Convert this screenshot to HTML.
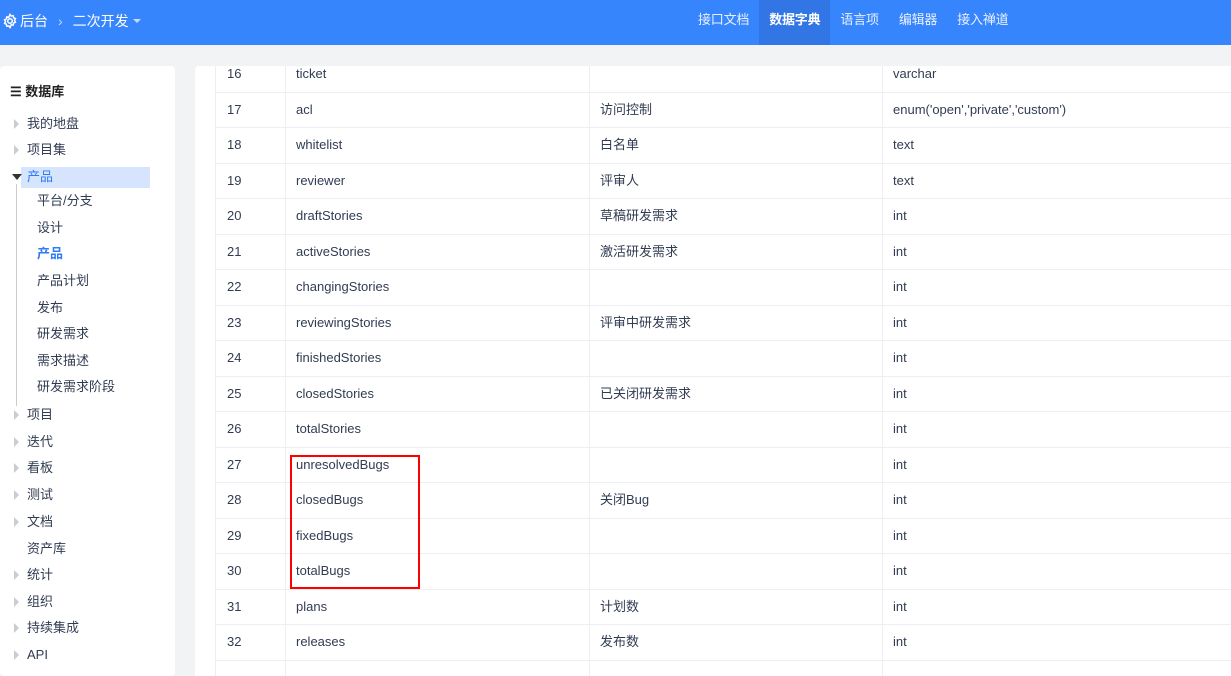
<!DOCTYPE html>
<html><head><meta charset="utf-8"><style>
*{margin:0;padding:0;box-sizing:border-box}
body{width:1231px;height:667px;overflow:hidden;background:#f2f3f5;font-family:"Liberation Sans","Noto Sans CJK SC",sans-serif;font-size:13px;color:#313c52;position:relative}
.hd{position:absolute;left:0;top:0;width:1231px;height:45px;background:#3785fd;color:#fff}
.hd .l{position:absolute;left:2px;top:11px;font-size:14px;display:flex;align-items:center}
.nav{position:absolute;left:688px;top:0;display:flex;height:45px}
.nav div{padding:0 10px;line-height:40px;font-size:13px;color:#e8f0ff;letter-spacing:-0.2px}
.nav .a{background:#3276e5;font-weight:bold;color:#fff;height:45px}
.sb{position:absolute;left:0;top:66px;width:175px;height:610px;background:#fff;border-radius:4px}
.sb .t{position:absolute;left:10px;top:15px;font-weight:bold;font-size:13px;color:#222}
.it{position:absolute;left:27px;font-size:13px;color:#313c52;line-height:16px}
.ar{position:absolute;left:14px;width:0;height:0;border-top:5px solid transparent;border-bottom:5px solid transparent;border-left:5px solid #c9ccd3}
.main{position:absolute;left:195px;top:66px;width:1040px;height:610px;background:#fff;border-radius:4px 0 0 0;overflow:hidden}
table{position:absolute;left:20px;top:-10px;border-collapse:collapse;width:1030px;table-layout:fixed}
td{border:1px solid #edeef1;height:35.5px;padding:0 10px;font-size:13px;color:#313c52;white-space:nowrap;line-height:16px;vertical-align:middle}
td span{display:inline-block;height:16px;line-height:16px;vertical-align:top}
td:nth-child(1){width:70px;padding-left:11px}td:nth-child(2){width:304px}td:nth-child(3){width:293px}
.red{position:absolute;left:290px;top:455px;width:130px;height:134px;border:2px solid #f00}
</style></head><body>
<div class="hd"><div class="l"><svg width="16" height="16" viewBox="0 0 16 16" fill="none" stroke="#fff" stroke-width="1.5"><circle cx="8" cy="8" r="2.3"/><path d="M8 1.5l1.2 1.6 2-.4.4 2 1.8.9-.9 1.8.9 1.8-1.8.9-.4 2-2-.4L8 14.5l-1.2-1.6-2 .4-.4-2-1.8-.9.9-1.8-.9-1.8 1.8-.9.4-2 2 .4z"/></svg><span style="margin-left:2px">后台</span><span style="margin:0 10px;color:#c6dafe">›</span><span>二次开发</span><span style="margin-left:4px;border-top:4px solid #c6dafe;border-left:4px solid transparent;border-right:4px solid transparent"></span></div>
<div class="nav"><div>接口文档</div><div class="a">数据字典</div><div>语言项</div><div>编辑器</div><div>接入禅道</div></div></div>
<div class="sb"><div class="t">☰ 数据库</div>
<div style="position:absolute;left:21px;top:101px;width:129px;height:21px;background:#d6e4fd"></div>
<div style="position:absolute;left:16px;top:118px;width:1px;height:222px;background:#ccc"></div>
</div>
<div style="position:absolute;left:12px;top:174px;border-left:5px solid transparent;border-right:5px solid transparent;border-top:6px solid #333"></div>
<div class="main"><table>
<tr><td><span>16</span></td><td><span>ticket</span></td><td></td><td><span>varchar</span></td></tr>
<tr><td><span>17</span></td><td><span>acl</span></td><td><span>访问控制</span></td><td><span>enum('open','private','custom')</span></td></tr>
<tr><td><span>18</span></td><td><span>whitelist</span></td><td><span>白名单</span></td><td><span>text</span></td></tr>
<tr><td><span>19</span></td><td><span>reviewer</span></td><td><span>评审人</span></td><td><span>text</span></td></tr>
<tr><td><span>20</span></td><td><span>draftStories</span></td><td><span>草稿研发需求</span></td><td><span>int</span></td></tr>
<tr><td><span>21</span></td><td><span>activeStories</span></td><td><span>激活研发需求</span></td><td><span>int</span></td></tr>
<tr><td><span>22</span></td><td><span>changingStories</span></td><td></td><td><span>int</span></td></tr>
<tr><td><span>23</span></td><td><span>reviewingStories</span></td><td><span>评审中研发需求</span></td><td><span>int</span></td></tr>
<tr><td><span>24</span></td><td><span>finishedStories</span></td><td></td><td><span>int</span></td></tr>
<tr><td><span>25</span></td><td><span>closedStories</span></td><td><span>已关闭研发需求</span></td><td><span>int</span></td></tr>
<tr><td><span>26</span></td><td><span>totalStories</span></td><td></td><td><span>int</span></td></tr>
<tr><td><span>27</span></td><td><span>unresolvedBugs</span></td><td></td><td><span>int</span></td></tr>
<tr><td><span>28</span></td><td><span>closedBugs</span></td><td><span>关闭Bug</span></td><td><span>int</span></td></tr>
<tr><td><span>29</span></td><td><span>fixedBugs</span></td><td></td><td><span>int</span></td></tr>
<tr><td><span>30</span></td><td><span>totalBugs</span></td><td></td><td><span>int</span></td></tr>
<tr><td><span>31</span></td><td><span>plans</span></td><td><span>计划数</span></td><td><span>int</span></td></tr>
<tr><td><span>32</span></td><td><span>releases</span></td><td><span>发布数</span></td><td><span>int</span></td></tr>
<tr><td></td><td></td><td></td><td></td></tr>
</table></div>
<div class="red"></div>
<div class="ar" style="top:119px"></div><div class="it" style="top:116px">我的地盘</div>
<div class="ar" style="top:145px"></div><div class="it" style="top:142px">项目集</div>
<div class="it" style="top:169px;color:#2e7cf6">产品</div>
<div class="it" style="top:193px;left:37px">平台/分支</div>
<div class="it" style="top:220px;left:37px">设计</div>
<div class="it" style="top:246px;left:37px;color:#2e7cf6;font-weight:bold">产品</div>
<div class="it" style="top:273px;left:37px">产品计划</div>
<div class="it" style="top:300px;left:37px">发布</div>
<div class="it" style="top:326px;left:37px">研发需求</div>
<div class="it" style="top:353px;left:37px">需求描述</div>
<div class="it" style="top:379px;left:37px">研发需求阶段</div>
<div class="ar" style="top:410px"></div><div class="it" style="top:407px">项目</div>
<div class="ar" style="top:437px"></div><div class="it" style="top:434px">迭代</div>
<div class="ar" style="top:463px"></div><div class="it" style="top:460px">看板</div>
<div class="ar" style="top:490px"></div><div class="it" style="top:487px">测试</div>
<div class="ar" style="top:517px"></div><div class="it" style="top:514px">文档</div>
<div class="it" style="top:541px">资产库</div>
<div class="ar" style="top:570px"></div><div class="it" style="top:567px">统计</div>
<div class="ar" style="top:597px"></div><div class="it" style="top:594px">组织</div>
<div class="ar" style="top:623px"></div><div class="it" style="top:620px">持续集成</div>
<div class="ar" style="top:650px"></div><div class="it" style="top:647px">API</div>
</body></html>
